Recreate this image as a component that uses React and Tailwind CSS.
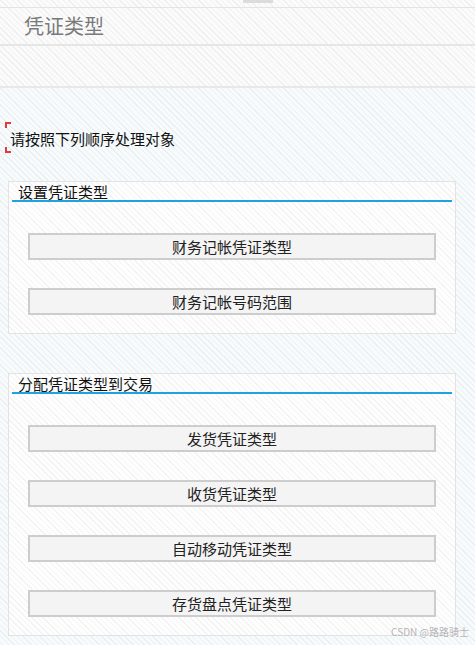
import React from 'react';

const font = { fontFamily: '"Noto Sans CJK SC", "Noto Sans", sans-serif' };

const hatch = 'bg-[repeating-linear-gradient(45deg,#efefef_0px,#efefef_1px,#fbfbfb_1px,#fbfbfb_4px)]';
const hatchBlue = 'bg-[repeating-linear-gradient(45deg,#e9eff2_0px,#e9eff2_1px,#f8fbfc_1px,#f8fbfc_4px)]';
const hatchLight = 'bg-[repeating-linear-gradient(45deg,#f3f3f3_0px,#f3f3f3_1px,#fefefe_1px,#fefefe_4px)]';

const ActionButton = ({ children }) => (
    <button className="mx-[19px] h-[27px] border-2 border-[#cdcdcd] bg-[#f4f4f4] text-[15px] leading-none text-[#222]">
        {children}
    </button>
);

const Section = ({ title, items, className }) => (
    <div className={`ml-2 w-[448px] border border-[#e3e3e3] ${hatchLight} ${className}`}>
        <div className="mx-[3px] h-[20px] border-b-2 border-[#1fa3e0] pl-[6px] text-[15px] leading-[20px] text-[#111]">
            {title}
        </div>
        <div className="flex flex-col gap-[28px] pt-[31px] pb-[18px]">
            {items.map((item) => (
                <ActionButton key={item}>{item}</ActionButton>
            ))}
        </div>
    </div>
);

export default function App() {
    return (
        <div className={`relative h-[645px] w-[475px] overflow-hidden ${hatch}`} style={font}>
            {/* top strip */}
            <div className="flex h-[8px] border-b border-[#e4e4e4] pl-[243px]">
                <div className="h-[3px] w-[30px] bg-[#dcdcdc]" />
            </div>

            {/* title */}
            <div className="h-[38px] border-b-2 border-[#e6e6e6] pl-6 text-[20px] leading-[36px] text-[#7a7a7a]">
                凭证类型
            </div>
            <div className="h-[42px] border-b-2 border-[#e8e8e8]" />

            <div className={`h-full ${hatchBlue}`}>
                {/* instruction */}
                <div className="flex items-center pt-[34px]">
                    <div className="relative ml-[5px] h-[31px] w-[6px]">
                        <div className="absolute left-0 top-0 h-[6px] w-[6px] border-l-2 border-t-2 border-[#e53935]" />
                        <div className="absolute bottom-0 left-0 h-[6px] w-[6px] border-b-2 border-l-2 border-[#e53935]" />
                    </div>
                    <span className="-ml-[1px] pt-[3px] text-[15px] text-[#111]">请按照下列顺序处理对象</span>
                </div>

                <Section
                    className="mt-[28px]"
                    title="设置凭证类型"
                    items={['财务记帐凭证类型', '财务记帐号码范围']}
                />
                <Section
                    className="mt-[39px]"
                    title="分配凭证类型到交易"
                    items={['发货凭证类型', '收货凭证类型', '自动移动凭证类型', '存货盘点凭证类型']}
                />
            </div>

            <div className="absolute bottom-[6px] right-[6px] text-[10px] text-[#b5b5b5]">
                CSDN @路路骑士
            </div>
        </div>
    );
}
